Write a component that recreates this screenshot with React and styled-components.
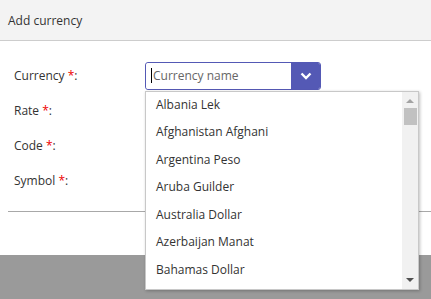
import React from "react";
import styled, { createGlobalStyle } from "styled-components";

const currencies = [
  "Albania Lek",
  "Afghanistan Afghani",
  "Argentina Peso",
  "Aruba Guilder",
  "Australia Dollar",
  "Azerbaijan Manat",
  "Bahamas Dollar",
];

const fields = ["Rate", "Code", "Symbol"];

const GlobalStyle = createGlobalStyle`
  html, body {
    margin: 0;
    padding: 0;
    height: 100%;
    background: #fff;
    font-family: "Open Sans", "Noto Sans", sans-serif;
    font-size: 12px;
    color: #333;
  }
  #root {
    height: 100%;
  }
`;

const App = () => {
  return (
    <>
      <GlobalStyle />
      <Page>
        <Dialog>
          <Header>Add currency</Header>
          <Body>
            <Form>
              <Row>
                <Label>
                  Currency <Star>*</Star>:
                </Label>
                <Combo>
                  <InputBox>
                    <Caret />
                    <Placeholder>Currency name</Placeholder>
                  </InputBox>
                  <ToggleButton>
                    <svg width="12" height="8" viewBox="0 0 12 8">
                      <path
                        d="M1.5 1.5 L6 6 L10.5 1.5"
                        fill="none"
                        stroke="#fff"
                        strokeWidth="2.4"
                      />
                    </svg>
                  </ToggleButton>
                  <Dropdown>
                    <List>
                      {currencies.map((c) => (
                        <Item key={c}>{c}</Item>
                      ))}
                    </List>
                    <Scrollbar>
                      <Arrow dir="up" />
                      <Thumb />
                      <Track />
                      <Arrow dir="down" />
                    </Scrollbar>
                  </Dropdown>
                </Combo>
              </Row>
              {fields.map((f) => (
                <Row key={f}>
                  <Label>
                    {f} <Star>*</Star>:
                  </Label>
                </Row>
              ))}
            </Form>
            <Divider />
          </Body>
        </Dialog>
        <Backdrop />
      </Page>
    </>
  );
};

export default App;

const Page = styled.div`
  height: 299px;
  display: flex;
  flex-direction: column;
`;

const Dialog = styled.div`
  position: relative;
  z-index: 1;
  background: #fff;
  height: 255px;
  flex-shrink: 0;
`;

const Backdrop = styled.div`
  flex: 1;
  background: #9a9a9a;
`;

const Header = styled.div`
  height: 40px;
  display: flex;
  align-items: center;
  padding: 0 8px;
  background: #f3f3f3;
  border-bottom: 1px solid #cdcdcd;
`;

const Body = styled.div`
  padding: 17px 0 0 8px;
`;

const Form = styled.div`
  display: flex;
  flex-direction: column;
  padding-left: 6px;
`;

const Row = styled.div`
  height: 35px;
  display: flex;
  align-items: center;
`;

const Label = styled.div`
  width: 131px;
  color: #333;
`;

const Star = styled.span`
  color: #e00;
`;

const Combo = styled.div`
  position: relative;
  display: flex;
  height: 28px;
  width: 176px;
  border: 1px solid #5459b5;
  border-radius: 3px;
  box-sizing: border-box;
`;

const InputBox = styled.div`
  flex: 1;
  display: flex;
  align-items: center;
  padding-left: 5px;
  background: #fff;
  border-radius: 3px 0 0 3px;
`;

const Caret = styled.span`
  width: 1px;
  height: 15px;
  background: #000;
  margin-right: 1px;
`;

const Placeholder = styled.span`
  color: #666;
`;

const ToggleButton = styled.div`
  width: 29px;
  display: flex;
  align-items: center;
  justify-content: center;
  background: #5459b5;
  border-radius: 0 2px 2px 0;
`;

const Dropdown = styled.div`
  position: absolute;
  top: 28px;
  left: -1px;
  width: 274px;
  height: 199px;
  display: flex;
  background: #fff;
  border: 1px solid #c8c8c8;
  box-sizing: border-box;
  box-shadow: 1px 1px 3px rgba(0, 0, 0, 0.25);
  z-index: 2;
`;

const List = styled.div`
  flex: 1;
  overflow: hidden;
  margin-top: -1px;
`;

const Item = styled.div`
  height: 27.5px;
  display: flex;
  align-items: center;
  padding-left: 10px;
  color: #333;
  white-space: nowrap;
`;

const Scrollbar = styled.div`
  width: 16px;
  display: flex;
  flex-direction: column;
  align-items: center;
  background: #f1f1f1;
`;

const Arrow = styled.div`
  width: 0;
  height: 0;
  margin: ${(p) => (p.dir === "up" ? "7px 0 5px" : "4px 0 7px")};
  border-left: 4px solid transparent;
  border-right: 4px solid transparent;
  ${(p) =>
    p.dir === "up"
      ? "border-bottom: 4px solid #a3a3a3;"
      : "border-top: 4px solid #505050;"}
`;

const Thumb = styled.div`
  width: 13px;
  height: 17px;
  background: #c1c1c1;
`;

const Track = styled.div`
  flex: 1;
`;

const Divider = styled.div`
  margin-top: 13px;
  height: 1px;
  background: #a8a8a8;
`;
